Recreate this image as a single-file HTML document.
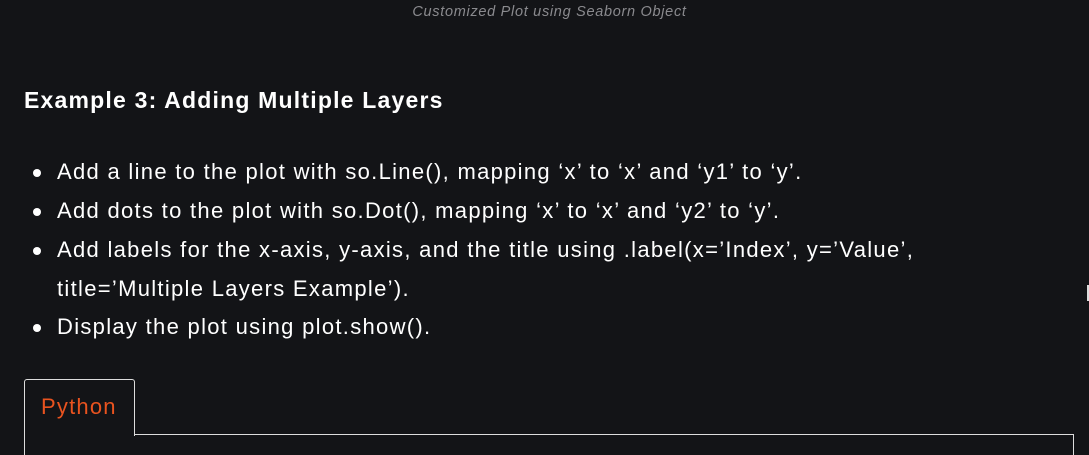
<!DOCTYPE html>
<html><head><meta charset="utf-8"><style>
html,body{margin:0;padding:0;background:#131417;width:1089px;height:455px;overflow:hidden;font-family:"Liberation Sans",sans-serif;color:#fff}
.cap{position:absolute;top:4px;left:0;width:1099px;text-align:center;font-style:italic;font-size:14.5px;letter-spacing:0.7px;color:#8a8a8e}
h3{position:absolute;left:24px;top:87px;margin:0;font-size:23px;font-weight:bold;letter-spacing:1.2px}
.li{position:absolute;left:57px;font-size:22px;white-space:nowrap;letter-spacing:1.3px}
.b{position:absolute;left:33px;width:8px;height:8px;border-radius:50%;background:#fff}
.tab{position:absolute;left:24px;top:379px;width:109px;height:56px;border:1px solid #ddd;border-bottom:none;border-radius:3px 3px 0 0;background:#131417}
.tab span{position:absolute;left:16px;top:14px;color:#e9531f;font-size:22px;letter-spacing:1.2px}
.ln{position:absolute;background:#ddd}
</style></head><body>
<div class="cap">Customized Plot using Seaborn Object</div>
<h3>Example 3: Adding Multiple Layers</h3>
<div class="b" style="top:169px"></div><div class="li" style="top:159px">Add a line to the plot with so.Line(), mapping ‘x’ to ‘x’ and ‘y1’ to ‘y’.</div>
<div class="b" style="top:208px"></div><div class="li" style="top:198px">Add dots to the plot with so.Dot(), mapping ‘x’ to ‘x’ and ‘y2’ to ‘y’.</div>
<div class="b" style="top:247px"></div><div class="li" style="top:237px">Add labels for the x-axis, y-axis, and the title using .label(x=’Index’, y=’Value’,</div>
<div class="li" style="top:276px">title=’Multiple Layers Example’).</div>
<div class="b" style="top:324px"></div><div class="li" style="top:314px">Display the plot using plot.show().</div>
<div class="ln" style="left:24px;top:434px;width:1050px;height:1px"></div>
<div class="ln" style="left:24px;top:434px;width:1px;height:21px"></div>
<div class="ln" style="left:1073px;top:434px;width:1px;height:21px"></div>
<div class="ln" style="left:1087px;top:285px;width:2px;height:16px"></div>
<div class="tab"><span>Python</span></div>
</body></html>
